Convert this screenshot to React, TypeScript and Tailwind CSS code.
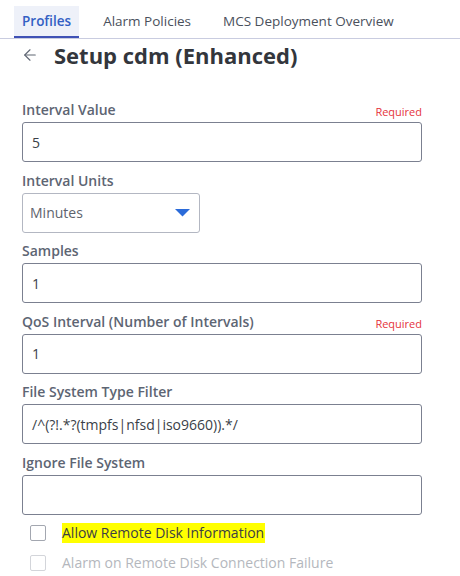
import { ArrowLeft } from "lucide-react";

type Field = {
  label: string;
  value: string;
  required?: boolean;
};

const fieldsTop: Field[] = [{ label: "Interval Value", value: "5", required: true }];

const fieldsBottom: Field[] = [
  { label: "Samples", value: "1" },
  { label: "QoS Interval (Number of Intervals)", value: "1", required: true },
  { label: "File System Type Filter", value: "/^(?!.*?(tmpfs|nfsd|iso9660)).*/" },
  { label: "Ignore File System", value: "" },
];

const FieldRow = ({ field }: { field: Field }) => (
  <div className="flex flex-col">
    <div className="flex items-end justify-between h-5 mb-[2px]">
      <span className="text-[14px] font-semibold text-[#5d6573] leading-5">
        {field.label}
      </span>
      {field.required && (
        <span className="text-[11px] text-[#e5333b] leading-4">Required</span>
      )}
    </div>
    <div className="h-10 w-full border border-[#7b8090] rounded-[3px] flex items-center pl-[9px] text-[14px] text-[#3a3f48]">
      {field.value}
    </div>
  </div>
);

const App = () => {
  const tabs = ["Profiles", "Alarm Policies", "MCS Deployment Overview"];

  return (
    <div className="w-[460px] h-[576px] bg-white overflow-hidden font-['Open_Sans',sans-serif]">
      <div className="flex gap-4 pl-[14px] pt-[6px] border-b border-[#c9cce0]">
        {tabs.map((tab, i) => (
          <div
            key={tab}
            className={`px-2 h-8 flex items-center text-[13.5px] ${
              i === 0
                ? "bg-[#eef1f9] text-[#3360c4] font-semibold border-b-2 border-[#3f51b5]"
                : "text-[#4a505c] font-medium border-b-2 border-transparent"
            }`}>
            {tab}
          </div>
        ))}
      </div>

      <div className="flex items-center h-[31px] pl-[21px]">
        <ArrowLeft size={18} strokeWidth={1.5} className="text-[#5f6673]" />
        <h1 className="ml-[15px] text-[22px] font-bold text-[#33363c] leading-none">
          Setup cdm (Enhanced)
        </h1>
      </div>

      <div className="w-[400px] ml-[22px] mt-[30px] flex flex-col gap-[8.5px]">
        {fieldsTop.map((f) => (
          <FieldRow key={f.label} field={f} />
        ))}

        <div className="flex flex-col">
          <div className="h-5 mb-[2px] text-[14px] font-semibold text-[#5d6573] leading-5">
            Interval Units
          </div>
          <div className="h-10 w-[178px] border border-[#b3b7c2] rounded-[3px] flex items-center justify-between pl-[7px] pr-[9px]">
            <span className="text-[14px] text-[#5e636d]">Minutes</span>
            <svg width="15" height="8" viewBox="0 0 15 8">
              <path d="M0 0 H15 L7.5 7.5 Z" fill="#2b6bd9" />
            </svg>
          </div>
        </div>

        {fieldsBottom.map((f) => (
          <FieldRow key={f.label} field={f} />
        ))}

        <div className="flex flex-col gap-[10px] pl-2">
          <div className="flex items-center gap-4">
            <div className="w-4 h-4 border border-[#a3a7b0] rounded-[2px]" />
            <span className="text-[14px] text-[#3b3e45] bg-[#ffff00] leading-5 pr-[1px]">
              Allow Remote Disk Information
            </span>
          </div>
          <div className="flex items-center gap-4">
            <div className="w-4 h-4 border border-[#d3d5da] rounded-[2px]" />
            <span className="text-[14px] text-[#b4b7bd] leading-5">
              Alarm on Remote Disk Connection Failure
            </span>
          </div>
        </div>
      </div>
    </div>
  );
};

export default App;
